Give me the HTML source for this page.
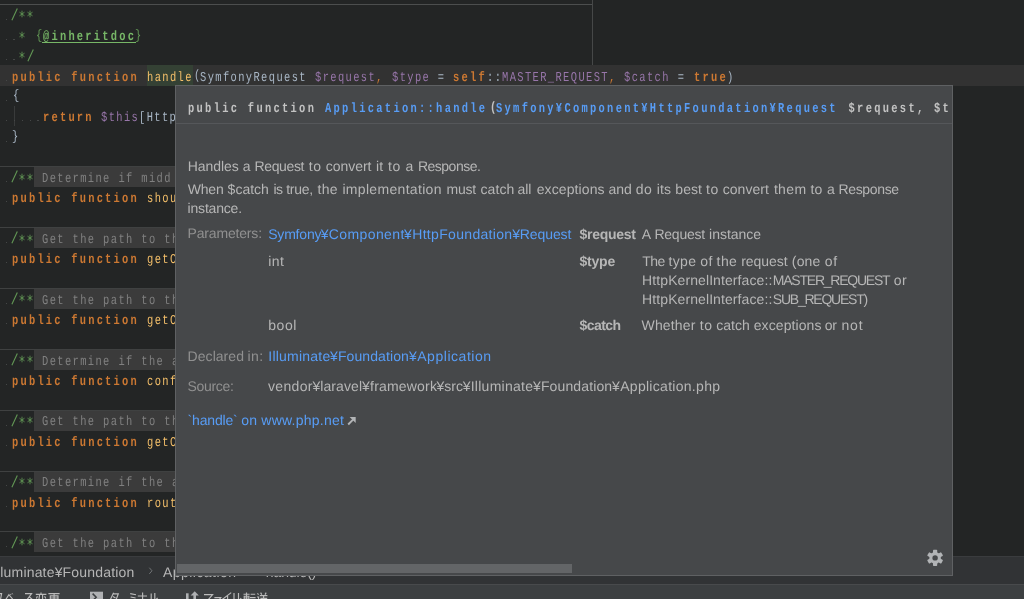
<!DOCTYPE html>
<html><head><meta charset="utf-8"><title>doc popup</title>
<style>html,body{margin:0;padding:0;background:#232525;}#r{position:relative;width:1024px;height:599px;overflow:hidden;background:#232525;font-family:"Liberation Sans",sans-serif;}#w{position:absolute;left:0;top:0;width:1024px;height:599px;will-change:transform;text-rendering:geometricPrecision;}#r span,#r div,#r svg{display:block;}</style>
</head><body><div id="r"><div id="w">
<!-- ed -->
<div style="position:absolute;left:0px;top:0px;width:1024px;height:556px;background:#232525;"></div>
<div style="position:absolute;left:0px;top:4px;width:592px;height:1px;background:#4c4e4e;"></div>
<div style="position:absolute;left:592px;top:0px;width:1px;height:86px;background:#464848;"></div>
<div style="position:absolute;left:0px;top:65px;width:1024px;height:21px;background:#323232;"></div>
<div style="position:absolute;left:147px;top:65px;width:46px;height:21px;background:#344134;"></div>
<div style="position:absolute;left:13.5px;top:106px;width:1px;height:20px;background:#393b3b;"></div>
<div style="position:absolute;left:0px;top:166px;width:200px;height:1px;background:#3f4141;"></div>
<div style="position:absolute;left:34px;top:167px;width:170px;height:20px;background:#3b3b3b;"></div>
<div style="position:absolute;left:0px;top:227px;width:200px;height:1px;background:#3f4141;"></div>
<div style="position:absolute;left:34px;top:228px;width:170px;height:20px;background:#3b3b3b;"></div>
<div style="position:absolute;left:0px;top:288px;width:200px;height:1px;background:#3f4141;"></div>
<div style="position:absolute;left:34px;top:289px;width:170px;height:20px;background:#3b3b3b;"></div>
<div style="position:absolute;left:0px;top:349px;width:200px;height:1px;background:#3f4141;"></div>
<div style="position:absolute;left:34px;top:350px;width:170px;height:20px;background:#3b3b3b;"></div>
<div style="position:absolute;left:0px;top:410px;width:200px;height:1px;background:#3f4141;"></div>
<div style="position:absolute;left:34px;top:411px;width:170px;height:20px;background:#3b3b3b;"></div>
<div style="position:absolute;left:0px;top:471px;width:200px;height:1px;background:#3f4141;"></div>
<div style="position:absolute;left:34px;top:472px;width:170px;height:20px;background:#3b3b3b;"></div>
<div style="position:absolute;left:0px;top:531px;width:200px;height:1px;background:#3f4141;"></div>
<div style="position:absolute;left:34px;top:532px;width:170px;height:20px;background:#3b3b3b;"></div>
<svg style="position:absolute;left:11.34px;top:7.14px" width="8" height="15" viewBox="0 -13 8 15"><path d="M0.9 0.3L6.3 -11.6" fill="none" stroke="#629755" stroke-width="1.1"/></svg>
<svg style="position:absolute;left:18.11px;top:9.44px" width="8" height="10" viewBox="-4 -5 8 10"><path d="M0 -3.3V3.3M-2.5 -1.8L2.5 1.8M-2.5 1.8L2.5 -1.8" fill="none" stroke="#629755" stroke-width="0.85"/></svg>
<svg style="position:absolute;left:25.76px;top:9.44px" width="8" height="10" viewBox="-4 -5 8 10"><path d="M0 -3.3V3.3M-2.5 -1.8L2.5 1.8M-2.5 1.8L2.5 -1.8" fill="none" stroke="#629755" stroke-width="0.85"/></svg>
<div style="position:absolute;left:5.72px;top:18.84px;width:1.6px;height:1px;background:#454747;"></div>
<svg style="position:absolute;left:18.11px;top:29.72px" width="8" height="10" viewBox="-4 -5 8 10"><path d="M0 -3.3V3.3M-2.5 -1.8L2.5 1.8M-2.5 1.8L2.5 -1.8" fill="none" stroke="#629755" stroke-width="0.85"/></svg>
<span style="position:absolute;left:35.78px;top:25.10px;line-height:20px;white-space:pre;transform:scale(0.82,1.07);transform-origin:0 0;font-family:'Liberation Mono',monospace;font-size:12.7px;color:#629755;letter-spacing:1.703px;">{</span>
<span style="position:absolute;left:42.62px;top:26.10px;line-height:20px;white-space:pre;transform:scale(0.82,1.07);transform-origin:0 0;font-family:'Liberation Mono',monospace;font-size:12.7px;color:#77b767;font-weight:bold;letter-spacing:2.709px;">@inheritdoc</span>
<span style="position:absolute;left:134.59px;top:25.10px;line-height:20px;white-space:pre;transform:scale(0.82,1.07);transform-origin:0 0;font-family:'Liberation Mono',monospace;font-size:12.7px;color:#629755;letter-spacing:1.703px;">}</span>
<div style="position:absolute;left:5.72px;top:39.12px;width:1.6px;height:1px;background:#454747;"></div>
<div style="position:absolute;left:13.37px;top:39.12px;width:1.6px;height:1px;background:#454747;"></div>
<div style="position:absolute;left:42px;top:42px;width:94px;height:1px;background:#77b767;"></div>
<svg style="position:absolute;left:18.11px;top:50.01px" width="8" height="10" viewBox="-4 -5 8 10"><path d="M0 -3.3V3.3M-2.5 -1.8L2.5 1.8M-2.5 1.8L2.5 -1.8" fill="none" stroke="#629755" stroke-width="0.85"/></svg>
<svg style="position:absolute;left:26.63px;top:47.71px" width="8" height="15" viewBox="0 -13 8 15"><path d="M0.9 0.3L6.3 -11.6" fill="none" stroke="#629755" stroke-width="1.1"/></svg>
<div style="position:absolute;left:5.72px;top:59.41px;width:1.6px;height:1px;background:#454747;"></div>
<div style="position:absolute;left:13.37px;top:59.41px;width:1.6px;height:1px;background:#454747;"></div>
<span style="position:absolute;left:12.04px;top:66.67px;line-height:20px;white-space:pre;transform:scale(0.82,1.07);transform-origin:0 0;font-family:'Liberation Mono',monospace;font-size:12.7px;color:#cc7832;font-weight:bold;letter-spacing:2.709px;">public function </span>
<span style="position:absolute;left:146.87px;top:66.67px;line-height:20px;white-space:pre;transform:scale(0.82,1.07);transform-origin:0 0;font-family:'Liberation Mono',monospace;font-size:12.7px;color:#f5c06a;letter-spacing:1.703px;">handle</span>
<span style="position:absolute;left:194.04px;top:65.47px;line-height:20px;white-space:pre;transform:scale(0.82,1.07);transform-origin:0 0;font-family:'Liberation Mono',monospace;font-size:12.7px;color:#a9b7c6;letter-spacing:1.703px;">(</span>
<span style="position:absolute;left:200.38px;top:66.67px;line-height:20px;white-space:pre;transform:scale(0.82,1.07);transform-origin:0 0;font-family:'Liberation Mono',monospace;font-size:12.7px;color:#a9b7c6;letter-spacing:1.703px;">SymfonyRequest </span>
<span style="position:absolute;left:315.06px;top:66.67px;line-height:20px;white-space:pre;transform:scale(0.82,1.07);transform-origin:0 0;font-family:'Liberation Mono',monospace;font-size:12.7px;color:#9876aa;letter-spacing:1.703px;">$request</span>
<span style="position:absolute;left:376.22px;top:66.67px;line-height:20px;white-space:pre;transform:scale(0.82,1.07);transform-origin:0 0;font-family:'Liberation Mono',monospace;font-size:12.7px;color:#cc7832;letter-spacing:1.703px;">, </span>
<span style="position:absolute;left:391.51px;top:66.67px;line-height:20px;white-space:pre;transform:scale(0.82,1.07);transform-origin:0 0;font-family:'Liberation Mono',monospace;font-size:12.7px;color:#9876aa;letter-spacing:1.703px;">$type</span>
<span style="position:absolute;left:429.73px;top:66.67px;line-height:20px;white-space:pre;transform:scale(0.82,1.07);transform-origin:0 0;font-family:'Liberation Mono',monospace;font-size:12.7px;color:#a9b7c6;letter-spacing:1.703px;"> = </span>
<span style="position:absolute;left:453.37px;top:66.67px;line-height:20px;white-space:pre;transform:scale(0.82,1.07);transform-origin:0 0;font-family:'Liberation Mono',monospace;font-size:12.7px;color:#cc7832;font-weight:bold;letter-spacing:2.709px;">self</span>
<span style="position:absolute;left:486.55px;top:66.67px;line-height:20px;white-space:pre;transform:scale(0.82,1.07);transform-origin:0 0;font-family:'Liberation Mono',monospace;font-size:12.7px;color:#a9b7c6;letter-spacing:1.703px;">::</span>
<span style="position:absolute;left:501.84px;top:66.67px;line-height:20px;white-space:pre;transform:scale(0.82,1.07);transform-origin:0 0;font-family:'Liberation Mono',monospace;font-size:12.7px;color:#9876aa;letter-spacing:1.703px;">MASTER_REQUEST</span>
<span style="position:absolute;left:608.87px;top:66.67px;line-height:20px;white-space:pre;transform:scale(0.82,1.07);transform-origin:0 0;font-family:'Liberation Mono',monospace;font-size:12.7px;color:#cc7832;letter-spacing:1.703px;">, </span>
<span style="position:absolute;left:624.15px;top:66.67px;line-height:20px;white-space:pre;transform:scale(0.82,1.07);transform-origin:0 0;font-family:'Liberation Mono',monospace;font-size:12.7px;color:#9876aa;letter-spacing:1.703px;">$catch</span>
<span style="position:absolute;left:670.02px;top:66.67px;line-height:20px;white-space:pre;transform:scale(0.82,1.07);transform-origin:0 0;font-family:'Liberation Mono',monospace;font-size:12.7px;color:#a9b7c6;letter-spacing:1.703px;"> = </span>
<span style="position:absolute;left:693.66px;top:66.67px;line-height:20px;white-space:pre;transform:scale(0.82,1.07);transform-origin:0 0;font-family:'Liberation Mono',monospace;font-size:12.7px;color:#cc7832;font-weight:bold;letter-spacing:2.709px;">true</span>
<span style="position:absolute;left:726.84px;top:66.67px;line-height:20px;white-space:pre;transform:scale(0.82,1.07);transform-origin:0 0;font-family:'Liberation Mono',monospace;font-size:12.7px;color:#a9b7c6;letter-spacing:1.703px;">)</span>
<div style="position:absolute;left:5.72px;top:79.69px;width:1.6px;height:1px;background:#454747;"></div>
<span style="position:absolute;left:12.84px;top:85.45px;line-height:20px;white-space:pre;transform:scale(0.82,1.07);transform-origin:0 0;font-family:'Liberation Mono',monospace;font-size:12.7px;color:#a9b7c6;letter-spacing:1.703px;">{</span>
<div style="position:absolute;left:5.72px;top:99.97px;width:1.6px;height:1px;background:#454747;"></div>
<span style="position:absolute;left:42.62px;top:107.23px;line-height:20px;white-space:pre;transform:scale(0.82,1.07);transform-origin:0 0;font-family:'Liberation Mono',monospace;font-size:12.7px;color:#cc7832;font-weight:bold;letter-spacing:2.709px;">return </span>
<span style="position:absolute;left:101.22px;top:107.23px;line-height:20px;white-space:pre;transform:scale(0.82,1.07);transform-origin:0 0;font-family:'Liberation Mono',monospace;font-size:12.7px;color:#9876aa;letter-spacing:1.703px;">$this</span>
<span style="position:absolute;left:139.44px;top:107.23px;line-height:20px;white-space:pre;transform:scale(0.82,1.07);transform-origin:0 0;font-family:'Liberation Mono',monospace;font-size:12.7px;color:#a9b7c6;letter-spacing:1.703px;">[Http</span>
<div style="position:absolute;left:5.70px;top:120.26px;width:1.6px;height:1px;background:#454747;"></div>
<div style="position:absolute;left:13.70px;top:120.26px;width:1.6px;height:1px;background:#454747;"></div>
<div style="position:absolute;left:21.60px;top:120.26px;width:1.6px;height:1px;background:#454747;"></div>
<div style="position:absolute;left:29.50px;top:120.26px;width:1.6px;height:1px;background:#454747;"></div>
<div style="position:absolute;left:37.40px;top:120.26px;width:1.6px;height:1px;background:#454747;"></div>
<span style="position:absolute;left:12.34px;top:126.01px;line-height:20px;white-space:pre;transform:scale(0.82,1.07);transform-origin:0 0;font-family:'Liberation Mono',monospace;font-size:12.7px;color:#a9b7c6;letter-spacing:1.703px;">}</span>
<div style="position:absolute;left:5.72px;top:140.54px;width:1.6px;height:1px;background:#454747;"></div>
<svg style="position:absolute;left:11.34px;top:169.40px" width="8" height="15" viewBox="0 -13 8 15"><path d="M0.9 0.3L6.3 -11.6" fill="none" stroke="#629755" stroke-width="1.1"/></svg>
<svg style="position:absolute;left:18.11px;top:171.70px" width="8" height="10" viewBox="-4 -5 8 10"><path d="M0 -3.3V3.3M-2.5 -1.8L2.5 1.8M-2.5 1.8L2.5 -1.8" fill="none" stroke="#629755" stroke-width="0.85"/></svg>
<svg style="position:absolute;left:25.76px;top:171.70px" width="8" height="10" viewBox="-4 -5 8 10"><path d="M0 -3.3V3.3M-2.5 -1.8L2.5 1.8M-2.5 1.8L2.5 -1.8" fill="none" stroke="#629755" stroke-width="0.85"/></svg>
<span style="position:absolute;left:41.92px;top:168.08px;line-height:20px;white-space:pre;transform:scale(0.82,1.07);transform-origin:0 0;font-family:'Liberation Mono',monospace;font-size:12.7px;color:#808080;letter-spacing:1.703px;">Determine if midd</span>
<div style="position:absolute;left:5.72px;top:181.10px;width:1.6px;height:1px;background:#454747;"></div>
<svg style="position:absolute;left:11.34px;top:230.25px" width="8" height="15" viewBox="0 -13 8 15"><path d="M0.9 0.3L6.3 -11.6" fill="none" stroke="#629755" stroke-width="1.1"/></svg>
<svg style="position:absolute;left:18.11px;top:232.55px" width="8" height="10" viewBox="-4 -5 8 10"><path d="M0 -3.3V3.3M-2.5 -1.8L2.5 1.8M-2.5 1.8L2.5 -1.8" fill="none" stroke="#629755" stroke-width="0.85"/></svg>
<svg style="position:absolute;left:25.76px;top:232.55px" width="8" height="10" viewBox="-4 -5 8 10"><path d="M0 -3.3V3.3M-2.5 -1.8L2.5 1.8M-2.5 1.8L2.5 -1.8" fill="none" stroke="#629755" stroke-width="0.85"/></svg>
<span style="position:absolute;left:41.92px;top:228.93px;line-height:20px;white-space:pre;transform:scale(0.82,1.07);transform-origin:0 0;font-family:'Liberation Mono',monospace;font-size:12.7px;color:#808080;letter-spacing:1.703px;">Get the path to th</span>
<div style="position:absolute;left:5.72px;top:241.95px;width:1.6px;height:1px;background:#454747;"></div>
<svg style="position:absolute;left:11.34px;top:291.10px" width="8" height="15" viewBox="0 -13 8 15"><path d="M0.9 0.3L6.3 -11.6" fill="none" stroke="#629755" stroke-width="1.1"/></svg>
<svg style="position:absolute;left:18.11px;top:293.40px" width="8" height="10" viewBox="-4 -5 8 10"><path d="M0 -3.3V3.3M-2.5 -1.8L2.5 1.8M-2.5 1.8L2.5 -1.8" fill="none" stroke="#629755" stroke-width="0.85"/></svg>
<svg style="position:absolute;left:25.76px;top:293.40px" width="8" height="10" viewBox="-4 -5 8 10"><path d="M0 -3.3V3.3M-2.5 -1.8L2.5 1.8M-2.5 1.8L2.5 -1.8" fill="none" stroke="#629755" stroke-width="0.85"/></svg>
<span style="position:absolute;left:41.92px;top:289.78px;line-height:20px;white-space:pre;transform:scale(0.82,1.07);transform-origin:0 0;font-family:'Liberation Mono',monospace;font-size:12.7px;color:#808080;letter-spacing:1.703px;">Get the path to th</span>
<div style="position:absolute;left:5.72px;top:302.80px;width:1.6px;height:1px;background:#454747;"></div>
<svg style="position:absolute;left:11.34px;top:351.95px" width="8" height="15" viewBox="0 -13 8 15"><path d="M0.9 0.3L6.3 -11.6" fill="none" stroke="#629755" stroke-width="1.1"/></svg>
<svg style="position:absolute;left:18.11px;top:354.25px" width="8" height="10" viewBox="-4 -5 8 10"><path d="M0 -3.3V3.3M-2.5 -1.8L2.5 1.8M-2.5 1.8L2.5 -1.8" fill="none" stroke="#629755" stroke-width="0.85"/></svg>
<svg style="position:absolute;left:25.76px;top:354.25px" width="8" height="10" viewBox="-4 -5 8 10"><path d="M0 -3.3V3.3M-2.5 -1.8L2.5 1.8M-2.5 1.8L2.5 -1.8" fill="none" stroke="#629755" stroke-width="0.85"/></svg>
<span style="position:absolute;left:41.92px;top:350.63px;line-height:20px;white-space:pre;transform:scale(0.82,1.07);transform-origin:0 0;font-family:'Liberation Mono',monospace;font-size:12.7px;color:#808080;letter-spacing:1.703px;">Determine if the a</span>
<div style="position:absolute;left:5.72px;top:363.65px;width:1.6px;height:1px;background:#454747;"></div>
<svg style="position:absolute;left:11.34px;top:412.80px" width="8" height="15" viewBox="0 -13 8 15"><path d="M0.9 0.3L6.3 -11.6" fill="none" stroke="#629755" stroke-width="1.1"/></svg>
<svg style="position:absolute;left:18.11px;top:415.10px" width="8" height="10" viewBox="-4 -5 8 10"><path d="M0 -3.3V3.3M-2.5 -1.8L2.5 1.8M-2.5 1.8L2.5 -1.8" fill="none" stroke="#629755" stroke-width="0.85"/></svg>
<svg style="position:absolute;left:25.76px;top:415.10px" width="8" height="10" viewBox="-4 -5 8 10"><path d="M0 -3.3V3.3M-2.5 -1.8L2.5 1.8M-2.5 1.8L2.5 -1.8" fill="none" stroke="#629755" stroke-width="0.85"/></svg>
<span style="position:absolute;left:41.92px;top:411.48px;line-height:20px;white-space:pre;transform:scale(0.82,1.07);transform-origin:0 0;font-family:'Liberation Mono',monospace;font-size:12.7px;color:#808080;letter-spacing:1.703px;">Get the path to th</span>
<div style="position:absolute;left:5.72px;top:424.50px;width:1.6px;height:1px;background:#454747;"></div>
<svg style="position:absolute;left:11.34px;top:473.65px" width="8" height="15" viewBox="0 -13 8 15"><path d="M0.9 0.3L6.3 -11.6" fill="none" stroke="#629755" stroke-width="1.1"/></svg>
<svg style="position:absolute;left:18.11px;top:475.95px" width="8" height="10" viewBox="-4 -5 8 10"><path d="M0 -3.3V3.3M-2.5 -1.8L2.5 1.8M-2.5 1.8L2.5 -1.8" fill="none" stroke="#629755" stroke-width="0.85"/></svg>
<svg style="position:absolute;left:25.76px;top:475.95px" width="8" height="10" viewBox="-4 -5 8 10"><path d="M0 -3.3V3.3M-2.5 -1.8L2.5 1.8M-2.5 1.8L2.5 -1.8" fill="none" stroke="#629755" stroke-width="0.85"/></svg>
<span style="position:absolute;left:41.92px;top:472.33px;line-height:20px;white-space:pre;transform:scale(0.82,1.07);transform-origin:0 0;font-family:'Liberation Mono',monospace;font-size:12.7px;color:#808080;letter-spacing:1.703px;">Determine if the a</span>
<div style="position:absolute;left:5.72px;top:485.35px;width:1.6px;height:1px;background:#454747;"></div>
<svg style="position:absolute;left:11.34px;top:534.50px" width="8" height="15" viewBox="0 -13 8 15"><path d="M0.9 0.3L6.3 -11.6" fill="none" stroke="#629755" stroke-width="1.1"/></svg>
<svg style="position:absolute;left:18.11px;top:536.80px" width="8" height="10" viewBox="-4 -5 8 10"><path d="M0 -3.3V3.3M-2.5 -1.8L2.5 1.8M-2.5 1.8L2.5 -1.8" fill="none" stroke="#629755" stroke-width="0.85"/></svg>
<svg style="position:absolute;left:25.76px;top:536.80px" width="8" height="10" viewBox="-4 -5 8 10"><path d="M0 -3.3V3.3M-2.5 -1.8L2.5 1.8M-2.5 1.8L2.5 -1.8" fill="none" stroke="#629755" stroke-width="0.85"/></svg>
<span style="position:absolute;left:41.92px;top:533.17px;line-height:20px;white-space:pre;transform:scale(0.82,1.07);transform-origin:0 0;font-family:'Liberation Mono',monospace;font-size:12.7px;color:#808080;letter-spacing:1.703px;">Get the path to th</span>
<div style="position:absolute;left:5.72px;top:546.20px;width:1.6px;height:1px;background:#454747;"></div>
<span style="position:absolute;left:12.04px;top:188.36px;line-height:20px;white-space:pre;transform:scale(0.82,1.07);transform-origin:0 0;font-family:'Liberation Mono',monospace;font-size:12.7px;color:#cc7832;font-weight:bold;letter-spacing:2.709px;">public function </span>
<span style="position:absolute;left:146.87px;top:188.36px;line-height:20px;white-space:pre;transform:scale(0.82,1.07);transform-origin:0 0;font-family:'Liberation Mono',monospace;font-size:12.7px;color:#f5c06a;letter-spacing:1.703px;">shou</span>
<div style="position:absolute;left:5.72px;top:201.39px;width:1.6px;height:1px;background:#454747;"></div>
<span style="position:absolute;left:12.04px;top:249.21px;line-height:20px;white-space:pre;transform:scale(0.82,1.07);transform-origin:0 0;font-family:'Liberation Mono',monospace;font-size:12.7px;color:#cc7832;font-weight:bold;letter-spacing:2.709px;">public function </span>
<span style="position:absolute;left:146.87px;top:249.21px;line-height:20px;white-space:pre;transform:scale(0.82,1.07);transform-origin:0 0;font-family:'Liberation Mono',monospace;font-size:12.7px;color:#f5c06a;letter-spacing:1.703px;">getC</span>
<div style="position:absolute;left:5.72px;top:262.24px;width:1.6px;height:1px;background:#454747;"></div>
<span style="position:absolute;left:12.04px;top:310.06px;line-height:20px;white-space:pre;transform:scale(0.82,1.07);transform-origin:0 0;font-family:'Liberation Mono',monospace;font-size:12.7px;color:#cc7832;font-weight:bold;letter-spacing:2.709px;">public function </span>
<span style="position:absolute;left:146.87px;top:310.06px;line-height:20px;white-space:pre;transform:scale(0.82,1.07);transform-origin:0 0;font-family:'Liberation Mono',monospace;font-size:12.7px;color:#f5c06a;letter-spacing:1.703px;">getC</span>
<div style="position:absolute;left:5.72px;top:323.08px;width:1.6px;height:1px;background:#454747;"></div>
<span style="position:absolute;left:12.04px;top:370.91px;line-height:20px;white-space:pre;transform:scale(0.82,1.07);transform-origin:0 0;font-family:'Liberation Mono',monospace;font-size:12.7px;color:#cc7832;font-weight:bold;letter-spacing:2.709px;">public function </span>
<span style="position:absolute;left:146.87px;top:370.91px;line-height:20px;white-space:pre;transform:scale(0.82,1.07);transform-origin:0 0;font-family:'Liberation Mono',monospace;font-size:12.7px;color:#f5c06a;letter-spacing:1.703px;">conf</span>
<div style="position:absolute;left:5.72px;top:383.93px;width:1.6px;height:1px;background:#454747;"></div>
<span style="position:absolute;left:12.04px;top:431.76px;line-height:20px;white-space:pre;transform:scale(0.82,1.07);transform-origin:0 0;font-family:'Liberation Mono',monospace;font-size:12.7px;color:#cc7832;font-weight:bold;letter-spacing:2.709px;">public function </span>
<span style="position:absolute;left:146.87px;top:431.76px;line-height:20px;white-space:pre;transform:scale(0.82,1.07);transform-origin:0 0;font-family:'Liberation Mono',monospace;font-size:12.7px;color:#f5c06a;letter-spacing:1.703px;">getC</span>
<div style="position:absolute;left:5.72px;top:444.78px;width:1.6px;height:1px;background:#454747;"></div>
<span style="position:absolute;left:12.04px;top:492.61px;line-height:20px;white-space:pre;transform:scale(0.82,1.07);transform-origin:0 0;font-family:'Liberation Mono',monospace;font-size:12.7px;color:#cc7832;font-weight:bold;letter-spacing:2.709px;">public function </span>
<span style="position:absolute;left:146.87px;top:492.61px;line-height:20px;white-space:pre;transform:scale(0.82,1.07);transform-origin:0 0;font-family:'Liberation Mono',monospace;font-size:12.7px;color:#f5c06a;letter-spacing:1.703px;">rout</span>
<div style="position:absolute;left:5.72px;top:505.63px;width:1.6px;height:1px;background:#454747;"></div>
<!-- bar -->
<div style="position:absolute;left:0px;top:556px;width:1024px;height:28px;background:#313335;"></div>
<div style="position:absolute;left:0px;top:584px;width:1024px;height:15px;background:#3c3f41;"></div>
<div style="position:absolute;left:0px;top:584px;width:1024px;height:1px;background:#484a4c;"></div>
<div style="position:absolute;left:0px;top:556px;width:1024px;height:1px;background:#3a3c3e;"></div>
<span style="position:absolute;left:-3.00px;top:562.15px;line-height:20px;white-space:pre;font-family:'Liberation Sans',sans-serif;font-size:14px;color:#b6b6b6;letter-spacing:0.181px;">lluminate¥Foundation</span>
<span style="position:absolute;left:163.00px;top:562.15px;line-height:20px;white-space:pre;font-family:'Liberation Sans',sans-serif;font-size:14px;color:#b6b6b6;letter-spacing:0.455px;">Application</span>
<span style="position:absolute;left:265.80px;top:562.15px;line-height:20px;white-space:pre;font-family:'Liberation Sans',sans-serif;font-size:14px;color:#b6b6b6;letter-spacing:-0.109px;">handle()</span>
<svg style="position:absolute;left:146px;top:564px" width="10" height="14" viewBox="146 564 10 14"><path d="M149.3 567.7 L152 570.8 L149.3 573.9" fill="none" stroke="#707375" stroke-width="1"/></svg>
<svg style="position:absolute;left:249px;top:564px" width="10" height="14" viewBox="249 564 10 14"><path d="M252.3 567.7 L255 570.8 L252.3 573.9" fill="none" stroke="#707375" stroke-width="1"/></svg>
<svg style="position:absolute;left:0;top:585px" width="300" height="14" viewBox="0 585 300 14">
<g fill="none" stroke="#bbbbbb" stroke-width="1.15">
<path d="M0 593.6 L1.6 593.6 L0.6 599"/>
<path d="M5.8 599.5 L8.9 594.6 L12.6 599"/><path d="M10.4 593.9 L11.1 595 M12 593.2 L12.7 594.3" stroke-width="0.9"/>
<path d="M25 593.6 L31.6 593.6 L27.2 599.5 M29.5 597 L32.3 599.5"/>
<path d="M41 592.6 L41 594.2 M35.8 594.4 L46.4 594.4 M39.6 594.6 L39 599 M42.6 594.6 L42.6 599 M37.4 596.3 L36.4 598.5 M44.6 596.3 L45.8 598.5"/>
<path d="M48.4 593.6 L59.6 593.6 M50.3 599 L50.3 595.8 L58 595.8 L58 599 M54.1 593.8 L54.1 599 M50.3 598 L58 598"/>
<path d="M113.6 592.8 L110.4 599.5 M113.4 593.8 L118.3 593.8 L116.2 599.5 M113 596.4 L115.5 598"/>
<path d="M130.2 593.6 L136 594.7 M130.6 597 L135.6 598"/>
<path d="M137.8 596 L147 596 M142.6 592.6 L142.6 599"/>
<path d="M151.2 593.6 L151.2 599.5 M154.8 593 L154.8 599.5 M157.6 597.8 L156.2 599.5"/>
<path d="M204 594.6 L212.6 594.6 L208.4 599.5"/>
<path d="M214.4 597.6 L220.8 597.6 L219.5 599.5"/>
<path d="M231.2 592.6 L222.2 599.5 M227.6 596 L227.6 599.5"/>
<path d="M234 593 L234 599.5 M238.5 593 L238.5 599.5 M241.2 598 L240 599.5"/>
<path d="M243.5 594.2 L249.6 594.2 M246.5 592.6 L246.5 599.5 M244.2 599 L244.2 596.2 L248.9 596.2 L248.9 599 M244.2 598 L248.9 598 M250.6 594.2 L255.2 594.2 M250 597.6 L255.6 597.6"/>
<path d="M260.6 592.6 L261.8 594.6 M266.2 592.6 L265 594.6 M259.8 595.6 L267.4 595.6 M257.4 593.4 L258.6 594.6 M260.4 598.4 L267.2 598.4 M263.6 595.6 L263.6 599.5 M257 597 L258.6 597 L258.6 599.5"/>
</g>
<rect x="90" y="591.7" width="13" height="8" fill="#afb1b3"/>
<path d="M92.6 593.6 L96.2 597.2 L92.6 600.8" fill="none" stroke="#3c3f41" stroke-width="1.5"/>
<g fill="#afb1b3"><rect x="186" y="593.3" width="2.6" height="6"/><rect x="193.4" y="594" width="2.6" height="6"/><path d="M194.7 591.2 L198.8 595.6 L190.6 595.6 Z"/></g>
</svg>
<!-- pop -->
<div style="position:absolute;left:175px;top:85px;width:778px;height:491px;background:#46484a;box-sizing:border-box;border:1px solid #5f6163;"></div>
<div style="position:absolute;left:176px;top:123px;width:776px;height:1px;background:#55575a;"></div>
<div style="position:absolute;left:177px;top:564px;width:395px;height:9px;background:#636567;"></div>
<span style="position:absolute;left:188.10px;top:97.68px;line-height:20px;white-space:pre;transform:scale(0.82,1.07);transform-origin:0 0;font-family:'Liberation Mono',monospace;font-size:12.7px;color:#c3c3c3;font-weight:bold;letter-spacing:2.810px;">public function </span>
<span style="position:absolute;left:324.95px;top:97.68px;line-height:20px;white-space:pre;transform:scale(0.82,1.07);transform-origin:0 0;font-family:'Liberation Mono',monospace;font-size:12.7px;color:#589df6;font-weight:bold;letter-spacing:2.810px;">Application::handle</span>
<span style="position:absolute;left:489.76px;top:96.68px;line-height:20px;white-space:pre;transform:scale(0.82,1.07);transform-origin:0 0;font-family:'Liberation Mono',monospace;font-size:12.7px;color:#c3c3c3;font-weight:bold;letter-spacing:2.810px;">(</span>
<span style="position:absolute;left:496.01px;top:97.68px;line-height:20px;white-space:pre;transform:scale(0.82,1.07);transform-origin:0 0;font-family:'Liberation Mono',monospace;font-size:12.7px;color:#589df6;font-weight:bold;letter-spacing:2.810px;">Symfony¥Component¥HttpFoundation¥Request</span>
<span style="position:absolute;left:839.63px;top:97.68px;line-height:20px;white-space:pre;transform:scale(0.82,1.07);transform-origin:0 0;font-family:'Liberation Mono',monospace;font-size:12.7px;color:#c3c3c3;font-weight:bold;letter-spacing:2.810px;"> $request, $t</span>
<span style="position:absolute;left:187.70px;top:155.65px;line-height:20px;white-space:pre;font-family:'Liberation Sans',sans-serif;font-size:14px;color:#b6b6b6;letter-spacing:-0.039px;">Handles</span>
<span style="position:absolute;left:242.80px;top:155.65px;line-height:20px;white-space:pre;font-family:'Liberation Sans',sans-serif;font-size:14px;color:#b6b6b6;letter-spacing:0.203px;">a</span>
<span style="position:absolute;left:254.50px;top:155.65px;line-height:20px;white-space:pre;font-family:'Liberation Sans',sans-serif;font-size:14px;color:#b6b6b6;letter-spacing:-0.365px;">Request</span>
<span style="position:absolute;left:308.80px;top:155.65px;line-height:20px;white-space:pre;font-family:'Liberation Sans',sans-serif;font-size:14px;color:#b6b6b6;letter-spacing:0.606px;">to</span>
<span style="position:absolute;left:325.70px;top:155.65px;line-height:20px;white-space:pre;font-family:'Liberation Sans',sans-serif;font-size:14px;color:#b6b6b6;letter-spacing:-0.017px;">convert</span>
<span style="position:absolute;left:376.10px;top:155.65px;line-height:20px;white-space:pre;font-family:'Liberation Sans',sans-serif;font-size:14px;color:#b6b6b6;letter-spacing:0.050px;">it</span>
<span style="position:absolute;left:387.90px;top:155.65px;line-height:20px;white-space:pre;font-family:'Liberation Sans',sans-serif;font-size:14px;color:#b6b6b6;letter-spacing:0.606px;">to</span>
<span style="position:absolute;left:405.40px;top:155.65px;line-height:20px;white-space:pre;font-family:'Liberation Sans',sans-serif;font-size:14px;color:#b6b6b6;letter-spacing:0.203px;">a</span>
<span style="position:absolute;left:418.00px;top:155.65px;line-height:20px;white-space:pre;font-family:'Liberation Sans',sans-serif;font-size:14px;color:#b6b6b6;letter-spacing:-0.515px;">Response.</span>
<span style="position:absolute;left:187.70px;top:178.55px;line-height:20px;white-space:pre;font-family:'Liberation Sans',sans-serif;font-size:14px;color:#b6b6b6;letter-spacing:-0.195px;">When</span>
<span style="position:absolute;left:227.60px;top:178.55px;line-height:20px;white-space:pre;font-family:'Liberation Sans',sans-serif;font-size:14px;color:#b6b6b6;letter-spacing:0.008px;">$catch</span>
<span style="position:absolute;left:273.60px;top:178.55px;line-height:20px;white-space:pre;font-family:'Liberation Sans',sans-serif;font-size:14px;color:#b6b6b6;letter-spacing:-0.812px;">is</span>
<span style="position:absolute;left:286.20px;top:178.55px;line-height:20px;white-space:pre;font-family:'Liberation Sans',sans-serif;font-size:14px;color:#b6b6b6;letter-spacing:-0.263px;">true,</span>
<span style="position:absolute;left:317.50px;top:178.55px;line-height:20px;white-space:pre;font-family:'Liberation Sans',sans-serif;font-size:14px;color:#b6b6b6;letter-spacing:0.277px;">the</span>
<span style="position:absolute;left:342.40px;top:178.55px;line-height:20px;white-space:pre;font-family:'Liberation Sans',sans-serif;font-size:14px;color:#b6b6b6;letter-spacing:0.319px;">implementation</span>
<span style="position:absolute;left:446.50px;top:178.55px;line-height:20px;white-space:pre;font-family:'Liberation Sans',sans-serif;font-size:14px;color:#b6b6b6;letter-spacing:-0.211px;">must</span>
<span style="position:absolute;left:480.40px;top:178.55px;line-height:20px;white-space:pre;font-family:'Liberation Sans',sans-serif;font-size:14px;color:#b6b6b6;letter-spacing:0.126px;">catch</span>
<span style="position:absolute;left:517.60px;top:178.55px;line-height:20px;white-space:pre;font-family:'Liberation Sans',sans-serif;font-size:14px;color:#b6b6b6;letter-spacing:-0.139px;">all</span>
<span style="position:absolute;left:536.70px;top:178.55px;line-height:20px;white-space:pre;font-family:'Liberation Sans',sans-serif;font-size:14px;color:#b6b6b6;letter-spacing:0.106px;">exceptions</span>
<span style="position:absolute;left:608.50px;top:178.55px;line-height:20px;white-space:pre;font-family:'Liberation Sans',sans-serif;font-size:14px;color:#b6b6b6;letter-spacing:-0.086px;">and</span>
<span style="position:absolute;left:635.70px;top:178.55px;line-height:20px;white-space:pre;font-family:'Liberation Sans',sans-serif;font-size:14px;color:#b6b6b6;letter-spacing:0.461px;">do</span>
<span style="position:absolute;left:656.80px;top:178.55px;line-height:20px;white-space:pre;font-family:'Liberation Sans',sans-serif;font-size:14px;color:#b6b6b6;letter-spacing:0.133px;">its</span>
<span style="position:absolute;left:675.30px;top:178.55px;line-height:20px;white-space:pre;font-family:'Liberation Sans',sans-serif;font-size:14px;color:#b6b6b6;letter-spacing:0.058px;">best</span>
<span style="position:absolute;left:706.00px;top:178.55px;line-height:20px;white-space:pre;font-family:'Liberation Sans',sans-serif;font-size:14px;color:#b6b6b6;letter-spacing:0.656px;">to</span>
<span style="position:absolute;left:722.70px;top:178.55px;line-height:20px;white-space:pre;font-family:'Liberation Sans',sans-serif;font-size:14px;color:#b6b6b6;letter-spacing:0.054px;">convert</span>
<span style="position:absolute;left:773.90px;top:178.55px;line-height:20px;white-space:pre;font-family:'Liberation Sans',sans-serif;font-size:14px;color:#b6b6b6;letter-spacing:0.344px;">them</span>
<span style="position:absolute;left:810.50px;top:178.55px;line-height:20px;white-space:pre;font-family:'Liberation Sans',sans-serif;font-size:14px;color:#b6b6b6;letter-spacing:0.206px;">to</span>
<span style="position:absolute;left:827.10px;top:178.55px;line-height:20px;white-space:pre;font-family:'Liberation Sans',sans-serif;font-size:14px;color:#b6b6b6;letter-spacing:-0.597px;">a</span>
<span style="position:absolute;left:838.40px;top:178.55px;line-height:20px;white-space:pre;font-family:'Liberation Sans',sans-serif;font-size:14px;color:#b6b6b6;letter-spacing:-0.331px;">Response</span>
<span style="position:absolute;left:187.60px;top:197.65px;line-height:20px;white-space:pre;font-family:'Liberation Sans',sans-serif;font-size:14px;color:#b6b6b6;letter-spacing:-0.194px;">instance.</span>
<span style="position:absolute;left:187.60px;top:222.95px;line-height:20px;white-space:pre;font-family:'Liberation Sans',sans-serif;font-size:14px;color:#909090;letter-spacing:-0.177px;">Parameters:</span>
<span style="position:absolute;left:268.20px;top:223.65px;line-height:20px;white-space:pre;font-family:'Liberation Sans',sans-serif;font-size:14px;color:#589df6;letter-spacing:-0.196px;">Symfony</span>
<span style="position:absolute;left:320.70px;top:223.65px;line-height:20px;white-space:pre;font-family:'Liberation Sans',sans-serif;font-size:14px;color:#589df6;letter-spacing:0.383px;">¥Component</span>
<span style="position:absolute;left:404.10px;top:223.65px;line-height:20px;white-space:pre;font-family:'Liberation Sans',sans-serif;font-size:14px;color:#589df6;letter-spacing:0.325px;">¥HttpFoundation</span>
<span style="position:absolute;left:512.20px;top:223.65px;line-height:20px;white-space:pre;font-family:'Liberation Sans',sans-serif;font-size:14px;color:#589df6;letter-spacing:-0.105px;">¥Request</span>
<span style="position:absolute;left:579.50px;top:223.65px;line-height:20px;white-space:pre;font-family:'Liberation Sans',sans-serif;font-size:14px;color:#b6b6b6;font-weight:bold;letter-spacing:-0.295px;">$request</span>
<span style="position:absolute;left:641.70px;top:223.65px;line-height:20px;white-space:pre;font-family:'Liberation Sans',sans-serif;font-size:14px;color:#b6b6b6;letter-spacing:0.956px;">A</span>
<span style="position:absolute;left:654.40px;top:223.65px;line-height:20px;white-space:pre;font-family:'Liberation Sans',sans-serif;font-size:14px;color:#b6b6b6;letter-spacing:-0.222px;">Request</span>
<span style="position:absolute;left:709.10px;top:223.65px;line-height:20px;white-space:pre;font-family:'Liberation Sans',sans-serif;font-size:14px;color:#b6b6b6;letter-spacing:-0.020px;">instance</span>
<span style="position:absolute;left:268.30px;top:250.65px;line-height:20px;white-space:pre;font-family:'Liberation Sans',sans-serif;font-size:14px;color:#b6b6b6;letter-spacing:0.401px;">int</span>
<span style="position:absolute;left:579.50px;top:250.65px;line-height:20px;white-space:pre;font-family:'Liberation Sans',sans-serif;font-size:14px;color:#b6b6b6;font-weight:bold;letter-spacing:-0.216px;">$type</span>
<span style="position:absolute;left:642.30px;top:250.65px;line-height:20px;white-space:pre;font-family:'Liberation Sans',sans-serif;font-size:14px;color:#b6b6b6;letter-spacing:-0.608px;">The</span>
<span style="position:absolute;left:668.60px;top:250.65px;line-height:20px;white-space:pre;font-family:'Liberation Sans',sans-serif;font-size:14px;color:#b6b6b6;letter-spacing:0.308px;">type</span>
<span style="position:absolute;left:700.20px;top:250.65px;line-height:20px;white-space:pre;font-family:'Liberation Sans',sans-serif;font-size:14px;color:#b6b6b6;letter-spacing:0.406px;">of</span>
<span style="position:absolute;left:716.60px;top:250.65px;line-height:20px;white-space:pre;font-family:'Liberation Sans',sans-serif;font-size:14px;color:#b6b6b6;letter-spacing:0.410px;">the</span>
<span style="position:absolute;left:741.20px;top:250.65px;line-height:20px;white-space:pre;font-family:'Liberation Sans',sans-serif;font-size:14px;color:#b6b6b6;letter-spacing:-0.029px;">request</span>
<span style="position:absolute;left:791.80px;top:250.65px;line-height:20px;white-space:pre;font-family:'Liberation Sans',sans-serif;font-size:14px;color:#b6b6b6;letter-spacing:0.167px;">(one</span>
<span style="position:absolute;left:824.70px;top:250.65px;line-height:20px;white-space:pre;font-family:'Liberation Sans',sans-serif;font-size:14px;color:#b6b6b6;letter-spacing:0.806px;">of</span>
<span style="position:absolute;left:642.10px;top:269.75px;line-height:20px;white-space:pre;font-family:'Liberation Sans',sans-serif;font-size:14px;color:#b6b6b6;letter-spacing:0.090px;">HttpKernelInterface::</span>
<span style="position:absolute;left:772.80px;top:269.75px;line-height:20px;white-space:pre;font-family:'Liberation Sans',sans-serif;font-size:14px;color:#b6b6b6;letter-spacing:-1.229px;">MASTER_REQUEST</span>
<span style="position:absolute;left:893.70px;top:269.75px;line-height:20px;white-space:pre;font-family:'Liberation Sans',sans-serif;font-size:14px;color:#b6b6b6;letter-spacing:0.523px;">or</span>
<span style="position:absolute;left:642.10px;top:288.75px;line-height:20px;white-space:pre;font-family:'Liberation Sans',sans-serif;font-size:14px;color:#b6b6b6;letter-spacing:0.090px;">HttpKernelInterface::</span>
<span style="position:absolute;left:772.80px;top:288.75px;line-height:20px;white-space:pre;font-family:'Liberation Sans',sans-serif;font-size:14px;color:#b6b6b6;letter-spacing:-1.227px;">SUB_REQUEST)</span>
<span style="position:absolute;left:268.30px;top:314.55px;line-height:20px;white-space:pre;font-family:'Liberation Sans',sans-serif;font-size:14px;color:#b6b6b6;letter-spacing:0.508px;">bool</span>
<span style="position:absolute;left:579.50px;top:314.55px;line-height:20px;white-space:pre;font-family:'Liberation Sans',sans-serif;font-size:14px;color:#b6b6b6;font-weight:bold;letter-spacing:-0.560px;">$catch</span>
<span style="position:absolute;left:641.60px;top:314.55px;line-height:20px;white-space:pre;font-family:'Liberation Sans',sans-serif;font-size:14px;color:#b6b6b6;letter-spacing:0.140px;">Whether</span>
<span style="position:absolute;left:699.70px;top:314.55px;line-height:20px;white-space:pre;font-family:'Liberation Sans',sans-serif;font-size:14px;color:#b6b6b6;letter-spacing:0.656px;">to</span>
<span style="position:absolute;left:716.20px;top:314.55px;line-height:20px;white-space:pre;font-family:'Liberation Sans',sans-serif;font-size:14px;color:#b6b6b6;letter-spacing:0.006px;">catch</span>
<span style="position:absolute;left:753.70px;top:314.55px;line-height:20px;white-space:pre;font-family:'Liberation Sans',sans-serif;font-size:14px;color:#b6b6b6;letter-spacing:0.096px;">exceptions</span>
<span style="position:absolute;left:824.70px;top:314.55px;line-height:20px;white-space:pre;font-family:'Liberation Sans',sans-serif;font-size:14px;color:#b6b6b6;letter-spacing:-0.127px;">or</span>
<span style="position:absolute;left:841.50px;top:314.55px;line-height:20px;white-space:pre;font-family:'Liberation Sans',sans-serif;font-size:14px;color:#b6b6b6;letter-spacing:0.810px;">not</span>
<span style="position:absolute;left:187.60px;top:346.25px;line-height:20px;white-space:pre;font-family:'Liberation Sans',sans-serif;font-size:14px;color:#909090;letter-spacing:0.046px;">Declared</span>
<span style="position:absolute;left:247.60px;top:346.25px;line-height:20px;white-space:pre;font-family:'Liberation Sans',sans-serif;font-size:14px;color:#909090;letter-spacing:0.334px;">in:</span>
<span style="position:absolute;left:268.30px;top:346.25px;line-height:20px;white-space:pre;font-family:'Liberation Sans',sans-serif;font-size:14px;color:#589df6;letter-spacing:0.228px;">Illuminate</span>
<span style="position:absolute;left:330.00px;top:346.25px;line-height:20px;white-space:pre;font-family:'Liberation Sans',sans-serif;font-size:14px;color:#589df6;letter-spacing:0.105px;">¥Foundation</span>
<span style="position:absolute;left:408.90px;top:346.25px;line-height:20px;white-space:pre;font-family:'Liberation Sans',sans-serif;font-size:14px;color:#589df6;letter-spacing:0.543px;">¥Application</span>
<span style="position:absolute;left:187.60px;top:376.35px;line-height:20px;white-space:pre;font-family:'Liberation Sans',sans-serif;font-size:14px;color:#909090;letter-spacing:-0.336px;">Source:</span>
<span style="position:absolute;left:267.90px;top:376.35px;line-height:20px;white-space:pre;font-family:'Liberation Sans',sans-serif;font-size:14px;color:#b6b6b6;letter-spacing:0.365px;">vendor</span>
<span style="position:absolute;left:312.40px;top:376.35px;line-height:20px;white-space:pre;font-family:'Liberation Sans',sans-serif;font-size:14px;color:#b6b6b6;letter-spacing:0.084px;">¥laravel</span>
<span style="position:absolute;left:362.10px;top:376.35px;line-height:20px;white-space:pre;font-family:'Liberation Sans',sans-serif;font-size:14px;color:#b6b6b6;letter-spacing:0.186px;">¥framework</span>
<span style="position:absolute;left:436.60px;top:376.35px;line-height:20px;white-space:pre;font-family:'Liberation Sans',sans-serif;font-size:14px;color:#b6b6b6;letter-spacing:-0.038px;">¥src</span>
<span style="position:absolute;left:462.70px;top:376.35px;line-height:20px;white-space:pre;font-family:'Liberation Sans',sans-serif;font-size:14px;color:#b6b6b6;letter-spacing:0.254px;">¥Illuminate</span>
<span style="position:absolute;left:533.00px;top:376.35px;line-height:20px;white-space:pre;font-family:'Liberation Sans',sans-serif;font-size:14px;color:#b6b6b6;letter-spacing:0.123px;">¥Foundation</span>
<span style="position:absolute;left:612.10px;top:376.35px;line-height:20px;white-space:pre;font-family:'Liberation Sans',sans-serif;font-size:14px;color:#b6b6b6;letter-spacing:0.292px;">¥Application.php</span>
<span style="position:absolute;left:187.60px;top:409.55px;line-height:20px;white-space:pre;font-family:'Liberation Sans',sans-serif;font-size:14px;color:#589df6;letter-spacing:-0.184px;">`handle`</span>
<span style="position:absolute;left:241.30px;top:409.55px;line-height:20px;white-space:pre;font-family:'Liberation Sans',sans-serif;font-size:14px;color:#589df6;letter-spacing:0.061px;">on</span>
<span style="position:absolute;left:261.30px;top:409.55px;line-height:20px;white-space:pre;font-family:'Liberation Sans',sans-serif;font-size:14px;color:#589df6;letter-spacing:0.239px;">www.php.net</span>
<svg style="position:absolute;left:346px;top:415px" width="12" height="12" viewBox="346 415 12 12"><path d="M349.6 417 L355.7 417 L355.7 423.1 Z" fill="#b2b4b6"/><path d="M348.2 424.5 L353.8 418.9" stroke="#b2b4b6" stroke-width="1.9" fill="none"/></svg>
<svg style="position:absolute;left:925px;top:547px" width="22" height="22" viewBox="-10.1 -10.9 22 22"><g fill="#b2b4b6"><circle r="5.8"/><rect x="-2.1" y="-8.05" width="4.2" height="4.5" rx="0.7" transform="rotate(0)"/><rect x="-2.1" y="-8.05" width="4.2" height="4.5" rx="0.7" transform="rotate(60)"/><rect x="-2.1" y="-8.05" width="4.2" height="4.5" rx="0.7" transform="rotate(120)"/><rect x="-2.1" y="-8.05" width="4.2" height="4.5" rx="0.7" transform="rotate(180)"/><rect x="-2.1" y="-8.05" width="4.2" height="4.5" rx="0.7" transform="rotate(240)"/><rect x="-2.1" y="-8.05" width="4.2" height="4.5" rx="0.7" transform="rotate(300)"/></g><circle r="2.7" fill="#46484a"/></svg>
</div></div></body></html>
